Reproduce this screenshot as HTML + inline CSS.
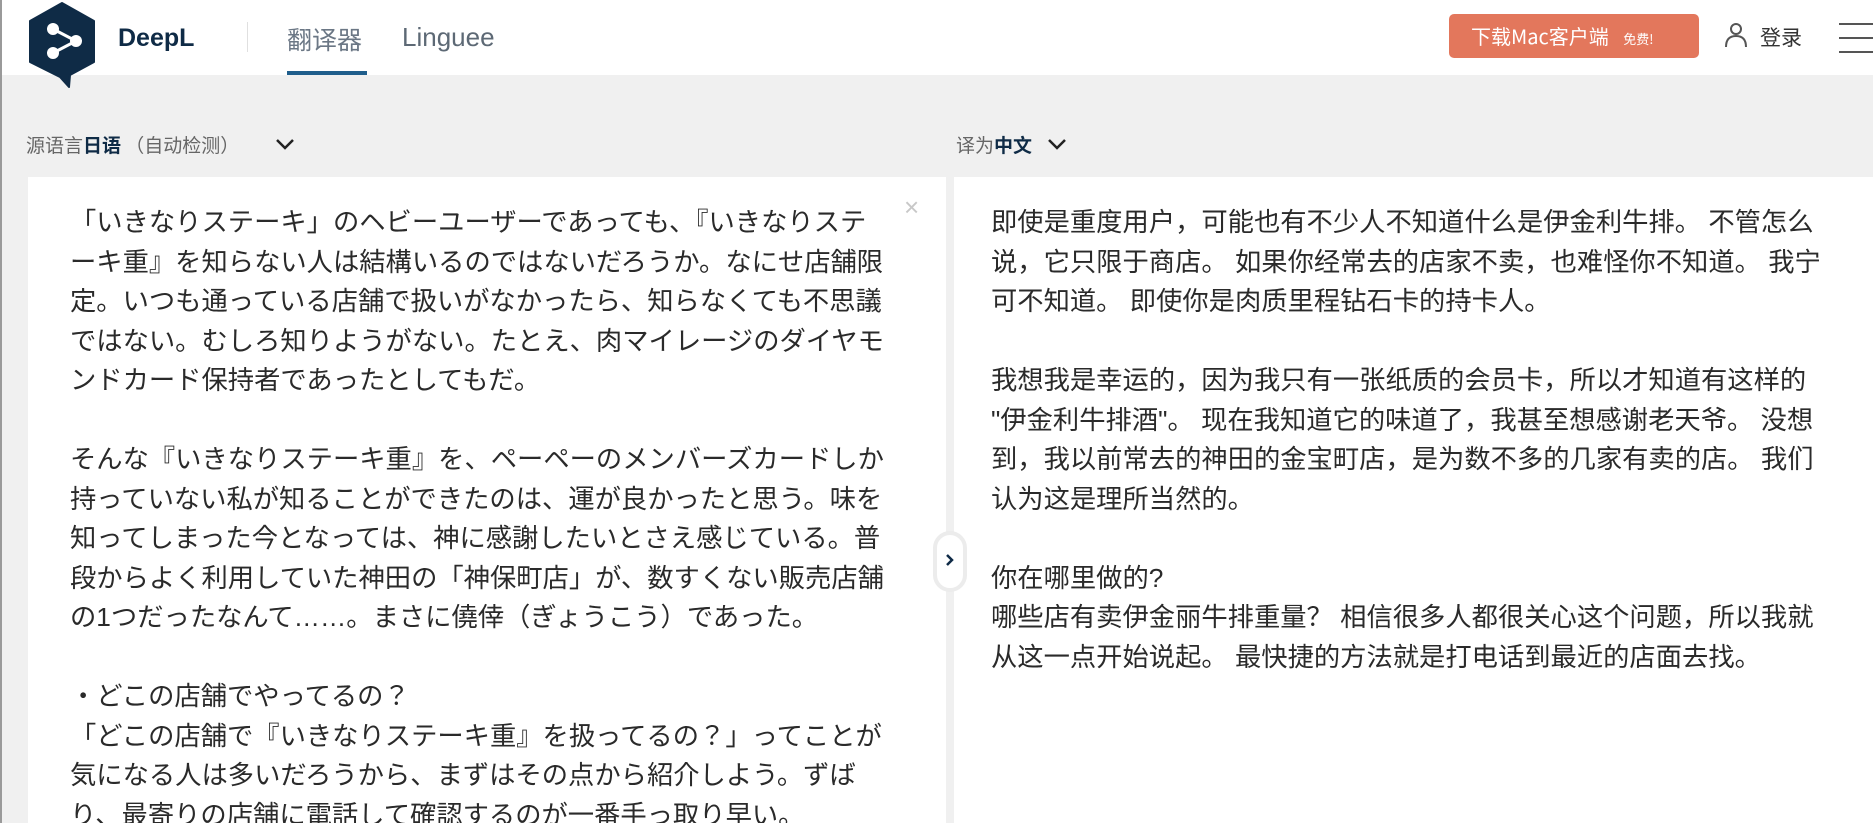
<!DOCTYPE html>
<html style="width:1873px;height:823px;overflow:hidden"><head><meta charset="utf-8"><style>
*{margin:0;padding:0;box-sizing:border-box}
body{width:1873px;height:823px;overflow:hidden;background:#f0f0f0;font-family:"Liberation Sans","Noto Sans CJK SC",sans-serif;position:relative;border-left:2px solid #9a9a9a}
.hdr{position:absolute;left:0;top:0;width:1873px;height:75px;background:#fff}
.abs{position:absolute}
.panel{position:absolute;top:177px;height:646px;overflow:hidden;background:#fff;color:#2a2a2a;font-size:26.3px;line-height:39.5px;padding-top:26px}
</style></head><body>
<div class="hdr">
  <svg class="abs" style="left:24px;top:0" width="72" height="90" viewBox="0 0 72 90">
    <path d="M36 3 L68 21 L68 62 L44 75 L43 87 L34 77 L4 62 L4 21 Z" fill="#0f2b46" stroke="#0f2b46" stroke-width="2" stroke-linejoin="round"/>
    <path d="M27 29 L50 41 L27 53" stroke="#fff" stroke-width="3" fill="none"/>
    <circle cx="27" cy="29" r="6" fill="#fff"/><circle cx="50" cy="41" r="6" fill="#fff"/><circle cx="27" cy="53" r="6" fill="#fff"/>
  </svg>
  <div class="abs" style="left:116px;top:24px;font-size:25px;font-weight:bold;color:#0f2b46">DeepL</div>
  <div class="abs" style="left:245px;top:22px;width:1px;height:30px;background:#e0e0e0"></div>
  <div class="abs" style="left:285px;top:21px;font-size:25px;color:#6b7785;font-family:'Noto Sans CJK SC',sans-serif">翻译器</div>
  <div class="abs" style="left:285px;top:71px;width:80px;height:4px;background:#1f5e8c"></div>
  <div class="abs" style="left:400px;top:22px;font-size:26px;color:#5d6975">Linguee</div>
  <div class="abs" style="left:1447px;top:14px;width:250px;height:44px;background:#e3775c;border-radius:5px;color:#fff;font-size:20px;line-height:44px;padding-left:22px;font-family:'Noto Sans CJK SC',sans-serif">下载Mac客户端 <span style="font-size:13px;margin-left:10px">免费!</span></div>
  <svg class="abs" style="left:1722px;top:22px" width="24" height="26" viewBox="0 0 24 26"><circle cx="12" cy="7" r="5" fill="none" stroke="#555" stroke-width="2"/><path d="M2 25 Q2 14 12 14 Q22 14 22 25" fill="none" stroke="#555" stroke-width="2"/></svg>
  <div class="abs" style="left:1758px;top:22px;font-size:21px;color:#333;font-family:'Noto Sans CJK SC',sans-serif">登录</div>
  <div class="abs" style="left:1837px;top:23px;width:36px;height:2px;background:#555"></div>
  <div class="abs" style="left:1837px;top:37px;width:36px;height:2px;background:#555"></div>
  <div class="abs" style="left:1837px;top:51px;width:36px;height:2px;background:#555"></div>
</div>
<div class="abs" style="left:24px;top:131px;font-size:19px;color:#666;font-family:'Noto Sans CJK SC',sans-serif">源语言<b style="color:#0f2b46">日语</b> （自动检测）</div>
<svg class="abs" style="left:273px;top:137px" width="20" height="14" viewBox="0 0 20 14"><path d="M2 3 L10 11 L18 3" fill="none" stroke="#222" stroke-width="2.5"/></svg>
<div class="abs" style="left:954px;top:131px;font-size:19px;color:#666;font-family:'Noto Sans CJK SC',sans-serif">译为<b style="color:#0f2b46">中文</b></div>
<svg class="abs" style="left:1045px;top:137px" width="20" height="14" viewBox="0 0 20 14"><path d="M2 3 L10 11 L18 3" fill="none" stroke="#222" stroke-width="2.5"/></svg>

<div class="panel" style="left:26px;width:918px;padding-left:42px;font-family:'Liberation Sans','Noto Sans CJK JP',sans-serif">
「いきなりステーキ」のヘビーユーザーであっても、『いきなりステ<br>ーキ重』を知らない人は結構いるのではないだろうか。なにせ店舗限<br>定。いつも通っている店舗で扱いがなかったら、知らなくても不思議<br>ではない。むしろ知りようがない。たとえ、肉マイレージのダイヤモ<br>ンドカード保持者であったとしてもだ。<br><br>そんな『いきなりステーキ重』を、ペーペーのメンバーズカードしか<br>持っていない私が知ることができたのは、運が良かったと思う。味を<br>知ってしまった今となっては、神に感謝したいとさえ感じている。普<br>段からよく利用していた神田の「神保町店」が、数すくない販売店舗<br>の1つだったなんて……。まさに僥倖（ぎょうこう）であった。<br><br>・どこの店舗でやってるの？<br>「どこの店舗で『いきなりステーキ重』を扱ってるの？」ってことが<br>気になる人は多いだろうから、まずはその点から紹介しよう。ずば<br>り、最寄りの店舗に電話して確認するのが一番手っ取り早い。
</div>
<div class="abs" style="left:902px;top:192px;font-size:26px;color:#c8c8c8">×</div>
<div class="panel" style="left:952px;width:921px;padding-left:37px;font-family:'Liberation Sans','Noto Sans CJK SC',sans-serif">
即使是重度用户，可能也有不少人不知道什么是伊金利牛排。 不管怎么<br>说，它只限于商店。 如果你经常去的店家不卖，也难怪你不知道。 我宁<br>可不知道。 即使你是肉质里程钻石卡的持卡人。<br><br>我想我是幸运的，因为我只有一张纸质的会员卡，所以才知道有这样的<br>"伊金利牛排酒"。 现在我知道它的味道了，我甚至想感谢老天爷。 没想<br>到，我以前常去的神田的金宝町店，是为数不多的几家有卖的店。 我们<br>认为这是理所当然的。<br><br>你在哪里做的?<br>哪些店有卖伊金丽牛排重量？ 相信很多人都很关心这个问题，所以我就<br>从这一点开始说起。 最快捷的方法就是打电话到最近的店面去找。
</div>
<div class="abs" style="left:931px;top:531px;width:34px;height:61px;background:#fff;border:4px solid #ececec;border-radius:17px"></div>
<svg class="abs" style="left:943px;top:553px" width="10" height="14" viewBox="0 0 10 14"><path d="M2 2 L7 7 L2 12" fill="none" stroke="#0f2b46" stroke-width="2.5"/></svg>
</body></html>
